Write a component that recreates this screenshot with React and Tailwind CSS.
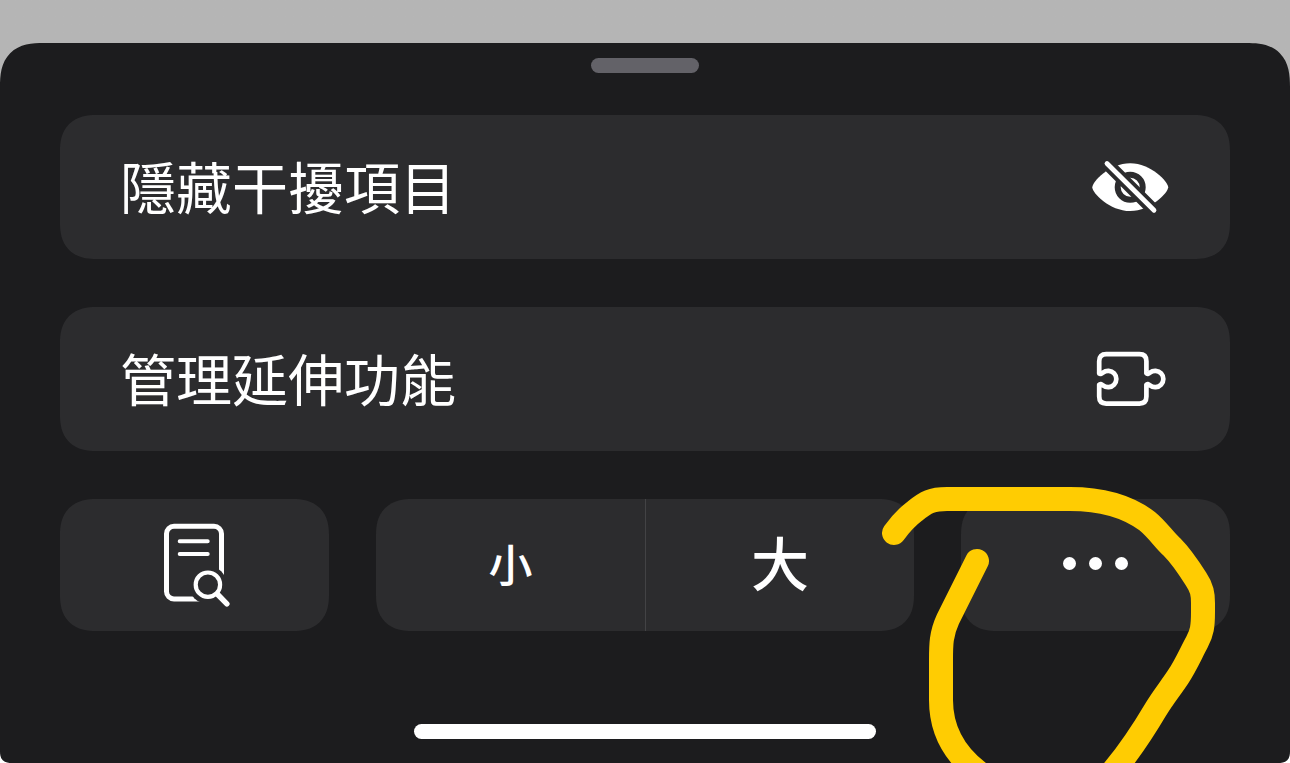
import React from 'react';

function HideEyeIcon() {
  return (
    <svg viewBox="0 0 80 56" className="w-20 h-14 shrink-0" aria-hidden="true">
      <mask id="eye-cut">
        <rect width="80" height="56" fill="white" />
        <circle cx="40.2" cy="28.2" r="12.5" fill="none" stroke="black" strokeWidth="6" />
        <path d="M10 -2.5 L72 59.5" stroke="black" strokeWidth="12.6" />
      </mask>
      <path
        mask="url(#eye-cut)"
        fill="white"
        d="M2.3 28.4 C2.3 23 19.5 4.3 40.2 4.3 S78.2 23 78.2 28.2 S61 52 40.2 52 S2.3 33.6 2.3 28.4 Z"
      />
      <path d="M17 4.5 L64 51.3" stroke="white" strokeWidth="4.8" strokeLinecap="round" />
    </svg>
  );
}

function PuzzleIcon() {
  return (
    <svg
      viewBox="0 0 80 60"
      className="w-20 h-15 shrink-0"
      fill="none"
      stroke="white"
      strokeWidth="4.7"
      strokeLinecap="round"
      strokeLinejoin="round"
      aria-hidden="true"
    >
      <path d="M9.2 24.4 V12.2 Q9.2 5.2 16.2 5.2 H49.4 Q56.4 5.2 56.4 12.2 V24.2 Q57.6 26 60 23.6 A8.2 8.2 0 1 1 60 36.4 Q57.6 34 56.4 35.8 V47.6 Q56.4 54.6 49.4 54.6 H16.2 Q9.2 54.6 9.2 47.6 V35.8 Q10.6 34 13 36.4 A8.2 8.2 0 1 0 13 23.6 Q10.6 26 9.2 24.2" />
    </svg>
  );
}

function FindOnPageIcon() {
  return (
    <svg viewBox="0 0 72 88" className="w-18 h-22" fill="none" stroke="white" aria-hidden="true">
      <mask id="page-cut">
        <rect width="72" height="88" fill="white" stroke="none" />
        <circle cx="48.7" cy="63.7" r="19" fill="black" stroke="none" />
        <path d="M55 63 L72 63 L72 88 L44 88 Z" fill="black" stroke="none" />
      </mask>
      <rect mask="url(#page-cut)" x="7.5" y="5.2" width="55" height="72.8" rx="7.5" strokeWidth="5" />
      <path d="M20.7 20.3 H48.7 M20.7 33 H48.7" strokeWidth="4" strokeLinecap="round" />
      <circle cx="48.9" cy="63.7" r="12.2" strokeWidth="4.2" />
      <path d="M58.7 73.5 L67.9 82.8" strokeWidth="5.4" strokeLinecap="round" />
    </svg>
  );
}

// hand-drawn marker loop around the "more" button
function MarkerLoop() {
  return (
    <svg
      viewBox="881 487 336 276"
      className="absolute -left-20 -top-3 w-[336px] h-[276px] pointer-events-none"
      fill="none"
      stroke="#ffcc02"
      strokeWidth="24"
      strokeLinecap="round"
      strokeLinejoin="round"
      aria-hidden="true"
    >
      <path d="M894 533 C902 522 907 517 915 511 C926 502 932 499 947 499 H1070 C1101 499 1127 506 1147 521 C1158 530 1164 540 1172 547 C1181 556 1189 568 1196 579 C1202 588 1203 594 1203 603 V612 C1203 626 1202 633 1197 642 C1191 653 1186 665 1178 677 C1170 689 1164 696 1156 709 C1143 731 1133 747 1114 770" />
      <path d="M977 561 L948 619 C941 634 941 645 941 660 V700 C941 728 952 752 978 772" />
    </svg>
  );
}

function MenuRow({ label, icon }) {
  return (
    <button
      type="button"
      className="flex h-36 w-full items-center justify-between rounded-[36px] [corner-shape:superellipse(1.25)] bg-[#2c2c2e] px-15 text-left text-[56px] leading-none"
    >
      <span className="pb-1">{label}</span>
      {icon}
    </button>
  );
}

export default function App() {
  return (
    <div className="flex min-h-screen flex-col overflow-hidden bg-linear-to-b from-[#b5b5b5] from-50% to-white to-50% pt-[43px] font-['Noto_Sans_CJK_TC',sans-serif] text-white">
      <main className="flex flex-1 flex-col rounded-t-[44px] rounded-b-xl [corner-shape:superellipse(1.4)] bg-[#1c1c1e] px-15 pt-[15px] pb-6">
        <div className="mx-auto h-[15px] w-27 rounded-full bg-[#636268]" />

        <div className="mt-[42px] flex flex-col gap-12">
          <MenuRow label="隱藏干擾項目" icon={<HideEyeIcon />} />
          <MenuRow label="管理延伸功能" icon={<PuzzleIcon />} />

          <div className="grid h-33 grid-cols-[1fr_2fr_1fr] gap-[47px]">
            <button
              type="button"
              aria-label="在網頁中尋找"
              className="flex items-center justify-center rounded-[36px] [corner-shape:superellipse(1.25)] bg-[#2c2c2e]"
            >
              <FindOnPageIcon />
            </button>

            <div className="grid grid-cols-2 overflow-hidden rounded-[36px] [corner-shape:superellipse(1.25)] bg-[#2c2c2e] font-medium leading-none">
              <button type="button" className="pb-1 text-[44px]">
                小
              </button>
              <button type="button" className="border-l border-[#434345] pb-2 text-[58px]">
                大
              </button>
            </div>

            <div className="relative">
              <button
                type="button"
                aria-label="更多"
                className="flex h-full w-full items-center justify-center gap-[13px] rounded-[36px] [corner-shape:superellipse(1.25)] bg-[#2c2c2e] pb-1"
              >
                <span className="size-[13px] rounded-full bg-white" />
                <span className="size-[13px] rounded-full bg-white" />
                <span className="size-[13px] rounded-full bg-white" />
              </button>
              <MarkerLoop />
            </div>
          </div>
        </div>

        <div className="mx-auto mt-auto h-[15px] w-[462px] rounded-full bg-white" />
      </main>
    </div>
  );
}
